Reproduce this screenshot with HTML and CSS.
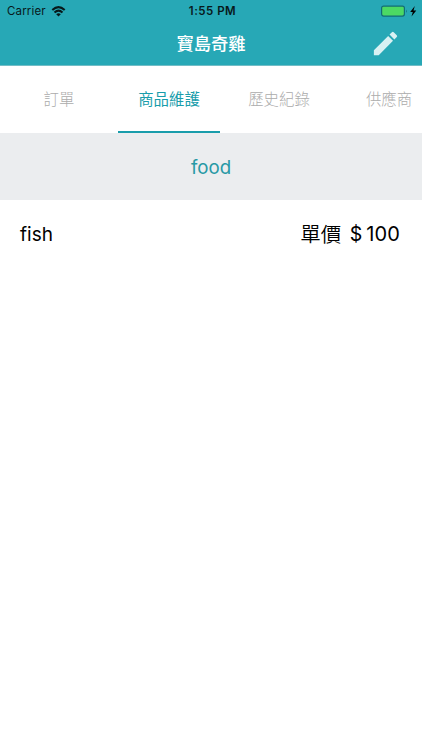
FILE: index.html
```html
<!DOCTYPE html>
<html lang="zh-Hant">
<head>
<meta charset="utf-8">
<title>寶島奇雞</title>
<link rel="stylesheet" href="styles.css">
</head>
<body>
<header class="header">
  <div class="status">
    <div class="carrier"><span>Carrier</span>
      <svg class="wifi" width="15" height="11" viewBox="0 0 14 11"><g fill="none" stroke="#07191b" stroke-width="2"><path d="M.8 4Q7-1.8 13.2 4"/><path d="M3 6.5Q7 2.8 11 6.5"/></g><path d="M7 10.5 4.7 8.2Q7 6.3 9.3 8.2Z" fill="#07191b"/></svg>
    </div>
    <time class="time">1:55 PM</time>
    <div class="power">
      <svg width="38" height="13" viewBox="0 0 38 13"><rect x="1.6" y="1.1" width="22.8" height="10" rx="2" fill="#4cd964" stroke="#136c75" stroke-width="1.2"/><path d="M26 4.5q1.6 1.7 0 3.5z" fill="#136c75"/><path d="M34.8 1 30.2 7h2.6L31.5 11.5 36.3 5.5h-2.8z" fill="#000"/></svg>
    </div>
  </div>
  <div class="navbar">
    <h1 class="title">寶島奇雞</h1>
    <button class="edit" aria-label="編輯"><svg width="31" height="31" viewBox="0 0 24 24"><path fill="#d8f1f3" d="M3 17.25V21h3.75L17.81 9.94l-3.75-3.75L3 17.25zM20.71 7.04a1 1 0 0 0 0-1.41l-2.34-2.34a1 1 0 0 0-1.41 0l-1.83 1.83 3.75 3.75 1.83-1.83z"/></svg></button>
  </div>
</header>
<nav class="tabs">
  <a class="tab">訂單</a>
  <a class="tab active">商品維護</a>
  <a class="tab">歷史紀錄</a>
  <a class="tab">供應商</a>
</nav>
<main>
  <h2 class="category">food</h2>
  <div class="item"><span class="name">fish</span><span class="price"><span class="label">單價</span><span class="dollar">$</span><span class="amount">100</span></span></div>
</main>
</body>
</html>
```
FILE: styles.css
```css
* { box-sizing: border-box; }
body {
  margin: 0;
  height: 750px;
  overflow: hidden;
  background: #fff;
  color: #000;
  font-family: Inter, "Noto Sans CJK TC", sans-serif;
}
.header {
  height: 66px;
  background: #27a8b6;
  border-bottom: 1px solid #72bdc6;
}
.status {
  display: grid;
  grid-template-columns: 1fr auto 1fr;
  height: 22px;
  padding: 0 4px 0 7px;
  align-items: center;
  color: #07191b;
  font-size: 11.5px;
  line-height: 22px;
}
.carrier { display: flex; align-items: center; gap: 5px; letter-spacing: 0.15px; }
.time { font-weight: 600; letter-spacing: 0.5px; }
.power { display: flex; justify-content: flex-end; }
.navbar {
  display: grid;
  grid-template-columns: 1fr auto 1fr;
  align-items: center;
  height: 42px;
}
.title {
  grid-column: 2;
  margin: 0;
  color: #fff;
  font-size: 17.3px;
  font-weight: 500;
  line-height: 41px;
}
.edit {
  justify-self: end;
  display: flex;
  margin-right: 21px;
  padding: 0;
  border: 0;
  background: none;
}
.tabs {
  display: flex;
  gap: 8px;
  height: 67px;
  padding-left: 8px;
  overflow: hidden;
}
.tab {
  flex: 0 0 102px;
  height: 67px;
  border-bottom: 2px solid transparent;
  color: #acacac;
  font-size: 15.4px;
  font-weight: 300;
  line-height: 68px;
  text-align: center;
}
.active { border-color: #199dab; color: #199dab; font-weight: 400; }
.category {
  height: 67px;
  margin: 0;
  background: #ebedef;
  color: #2799a5;
  font-size: 18.7px;
  font-weight: 400;
  line-height: 69px;
  text-align: center;
}
.item {
  display: flex;
  justify-content: space-between;
  height: 67px;
  padding: 0 21px 0 20px;
  font-size: 19px;
  line-height: 69px;
}
.price { display: flex; font-size: 20px; }
.label { font-size: 20.5px; font-weight: 350; }
.dollar { margin-left: 8.5px; font-size: 19.5px; }
.amount { margin-left: 4px; letter-spacing: 0.2px; margin-right: 0.8px; }
```
